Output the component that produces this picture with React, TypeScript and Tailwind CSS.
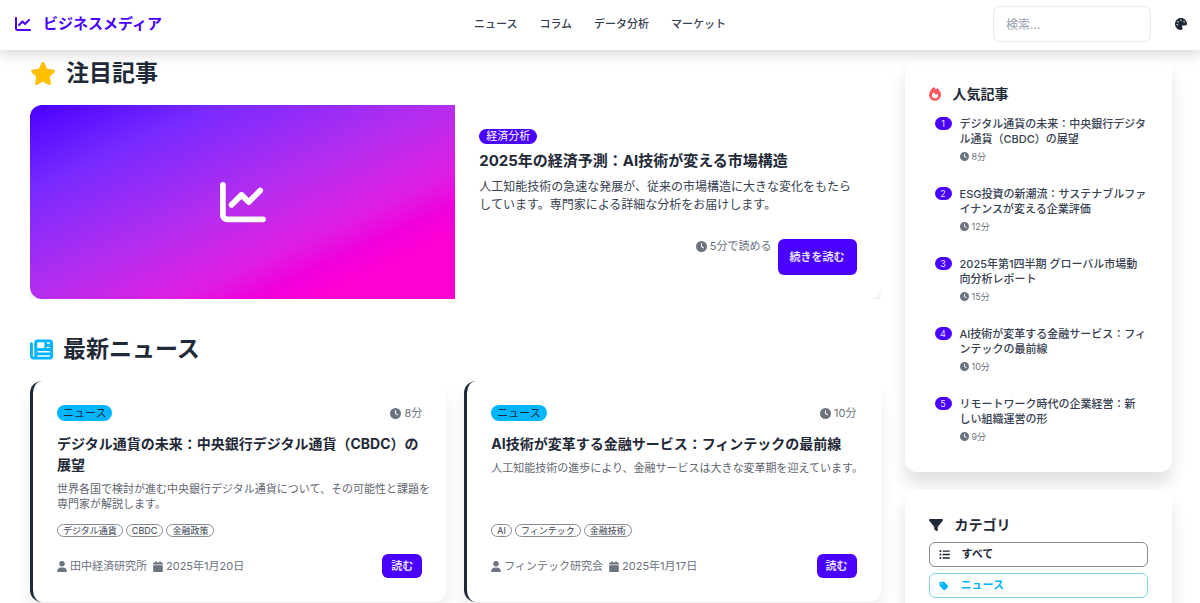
import {
  FaCalendar,
  FaChartLine,
  FaClock,
  FaFilter,
  FaFire,
  FaListUl,
  FaNewspaper,
  FaPalette,
  FaStar,
  FaTag,
  FaUser,
} from "react-icons/fa6";

type Article = {
  title: string;
  summary: string;
  minutes: number;
  tags: string[];
  author: string;
  date: string;
};

type PopularArticle = {
  title: string;
  minutes: number;
};

const navItems = ["ニュース", "コラム", "データ分析", "マーケット"];

const articles: Article[] = [
  {
    title: "デジタル通貨の未来：中央銀行デジタル通貨（CBDC）の展望",
    summary:
      "世界各国で検討が進む中央銀行デジタル通貨について、その可能性と課題を専門家が解説します。",
    minutes: 8,
    tags: ["デジタル通貨", "CBDC", "金融政策"],
    author: "田中経済研究所",
    date: "2025年1月20日",
  },
  {
    title: "AI技術が変革する金融サービス：フィンテックの最前線",
    summary: "人工知能技術の進歩により、金融サービスは大きな変革期を迎えています。",
    minutes: 10,
    tags: ["AI", "フィンテック", "金融技術"],
    author: "フィンテック研究会",
    date: "2025年1月17日",
  },
];

const popular: PopularArticle[] = [
  { title: "デジタル通貨の未来：中央銀行デジタ\nル通貨（CBDC）の展望", minutes: 8 },
  { title: "ESG投資の新潮流：サステナブルファ\nイナンスが変える企業評価", minutes: 12 },
  { title: "2025年第1四半期 グローバル市場動\n向分析レポート", minutes: 15 },
  { title: "AI技術が変革する金融サービス：フィ\nンテックの最前線", minutes: 10 },
  { title: "リモートワーク時代の企業経営：新\nしい組織運営の形", minutes: 9 },
];

function Header() {
  return (
    <header className="relative z-10 grid h-[50px] grid-cols-[1fr_auto_1fr] items-center bg-white px-[13px] pb-0.5 shadow-[0_4px_12px_rgba(0,0,0,0.16)]">
      <a href="#" className="flex items-center gap-3 text-[15px] font-bold text-[#4a00ff]">
        <FaChartLine className="ml-0.5 size-4" />
        ビジネスメディア
      </a>
      <nav className="flex gap-[22px] text-[11px] font-medium text-[#374151]">
        {navItems.map((item) => (
          <a key={item} href="#">
            {item}
          </a>
        ))}
      </nav>
      <div className="flex items-center justify-end gap-6">
        <input
          type="search"
          aria-label="検索"
          placeholder="検索..."
          className="h-9 w-[158px] rounded-md border border-[#ebebeb] bg-white px-3 text-xs placeholder:text-gray-400"
        />
        <button type="button" aria-label="テーマ">
          <FaPalette className="size-3" />
        </button>
      </div>
    </header>
  );
}

function Featured() {
  return (
    <section>
      <h2 className="mb-[18px] flex items-center gap-[10px] text-[23px] leading-7 font-bold">
        <FaStar className="h-[23px] w-[26px] text-[#ffbe00]" />
        注目記事
      </h2>
      <div className="overflow-hidden">
        <article className="grid grid-cols-2 overflow-hidden rounded-xl bg-white shadow-[0_12px_16px_rgba(0,0,0,0.08)]">
          <div className="flex items-center justify-center bg-[linear-gradient(to_bottom_right,#4a00ff,#782aff_22%,#b72dee_50%,#de1ee2_67%,#f000dc_76%,#ff00d3_84%)] text-white">
            <FaChartLine className="size-[46px]" />
          </div>
          <div className="flex flex-col gap-[6px] p-6">
            <span className="self-start rounded-full bg-[#4a00ff] px-[7px] text-[11px] leading-[15px] text-white">
              経済分析
            </span>
            <h3 className="text-[15px] leading-[22px] font-bold">
              2025年の経済予測：AI技術が変える市場構造
            </h3>
            <p className="text-xs leading-[18px] text-[#374151]">
              人工知能技術の急速な発展が、従来の市場構造に大きな変化をもたらしています。専門家による詳細な分析をお届けします。
            </p>
            <div className="mt-[19px] flex items-start justify-end gap-[6px]">
              <span className="flex items-center gap-[3px] text-[11px] leading-[15px] text-[#6b7280]">
                <FaClock className="size-[11px]" />
                5分で読める
              </span>
              <button
                type="button"
                className="h-9 rounded-md bg-[#4a00ff] px-3 text-[11px] font-bold text-[#e6e0ff]"
              >
                続きを読む
              </button>
            </div>
          </div>
        </article>
      </div>
    </section>
  );
}

function ArticleCard({ article }: { article: Article }) {
  return (
    <article className="flex flex-col rounded-xl border-l-3 border-[#1f2937] bg-white p-6 shadow-[0_12px_16px_rgba(0,0,0,0.08)]">
      <div className="flex items-center justify-between">
        <span className="rounded-full bg-[#00b5ff] px-[6px] text-[11px] leading-4">
          ニュース
        </span>
        <span className="flex items-center gap-[3px] text-[11px] leading-4 text-[#6b7280]">
          <FaClock className="size-[11px]" />
          {article.minutes}分
        </span>
      </div>
      <h3 className="mt-3 text-sm leading-[21px] font-bold">{article.title}</h3>
      <p className="mt-[7px] -mr-3 flex-1 text-[11px] leading-[15px] text-[#5f6670]">
        {article.summary}
      </p>
      <div className="mt-3 flex gap-[3px]">
        {article.tags.map((tag) => (
          <span
            key={tag}
            className="rounded-full border border-[#858b95] px-[5px] text-[9px] leading-[11px] text-[#374151]"
          >
            {tag}
          </span>
        ))}
      </div>
      <div className="mt-[17px] flex items-center justify-between">
        <div className="flex items-center gap-[6px] text-[11px] leading-[15px] text-[#6b7280]">
          <span className="flex items-center gap-[3px]">
            <FaUser className="h-[11px] w-[10px]" />
            {article.author}
          </span>
          <span className="flex items-center gap-[3px]">
            <FaCalendar className="h-[11px] w-[10px]" />
            {article.date}
          </span>
        </div>
        <button
          type="button"
          className="h-6 rounded-md bg-[#4a00ff] px-[9px] text-[11px] font-bold text-[#e6e0ff]"
        >
          読む
        </button>
      </div>
    </article>
  );
}

function LatestNews() {
  return (
    <section className="mt-9">
      <h2 className="mb-[18px] flex items-center gap-[10px] text-[23px] leading-7 font-bold">
        <FaNewspaper className="size-[23px] text-[#00b5ff]" />
        最新ニュース
      </h2>
      <div className="grid grid-cols-2 gap-[18px]">
        {articles.map((article) => (
          <ArticleCard key={article.title} article={article} />
        ))}
      </div>
    </section>
  );
}

function Popular() {
  return (
    <section className="rounded-xl bg-white p-6 shadow-[0_12px_16px_rgba(0,0,0,0.12)]">
      <h2 className="flex items-center gap-3 text-sm leading-[22px] font-bold">
        <FaFire className="h-[14px] w-3 text-[#ff5861]" />
        人気記事
      </h2>
      <ol className="mt-[6px] flex flex-col gap-[13px]">
        {popular.map((item, index) => (
          <li key={item.title} className="flex items-start gap-2 py-[6px] pl-[6px]">
            <span className="w-[17px] shrink-0 rounded-full bg-[#4a00ff] text-center text-[9px] leading-[13px] text-[#e6e0ff]">
              {index + 1}
            </span>
            <div>
              <a
                href="#"
                className="block text-[11px] leading-[15px] font-medium whitespace-pre text-[#374151]"
              >
                {item.title}
              </a>
              <span className="mt-1 flex items-center gap-[3px] text-[9px] leading-[11px] text-[#6b7280]">
                <FaClock className="size-[9px]" />
                {item.minutes}分
              </span>
            </div>
          </li>
        ))}
      </ol>
    </section>
  );
}

function Categories() {
  return (
    <section className="mt-[18px] rounded-xl bg-white p-6 shadow-[0_12px_16px_rgba(0,0,0,0.12)]">
      <h2 className="flex items-center gap-3 text-sm leading-[22px] font-bold">
        <FaFilter className="size-[14px]" />
        カテゴリ
      </h2>
      <div className="mt-[6px] flex flex-col gap-[6px] text-[11px] font-bold">
        <button
          type="button"
          className="flex h-[25px] items-center gap-3 rounded-md border border-[#858b95] px-[9px]"
        >
          <FaListUl className="size-[11px]" />
          すべて
        </button>
        <button
          type="button"
          className="flex h-[25px] items-center gap-3 rounded-md border border-[#7fd3e6] px-[9px] text-[#00b5ff]"
        >
          <FaTag className="size-[10px]" />
          ニュース
        </button>
      </div>
    </section>
  );
}

export default function App() {
  return (
    <div className="min-h-screen bg-white font-[Inter,'Noto_Sans_CJK_JP',sans-serif] text-[#1f2937]">
      <Header />
      <div className="grid grid-cols-4 items-start gap-6 pt-[9px] pr-7 pl-[30px]">
        <main className="col-span-3">
          <Featured />
          <LatestNews />
        </main>
        <aside>
          <Popular />
          <Categories />
        </aside>
      </div>
    </div>
  );
}
